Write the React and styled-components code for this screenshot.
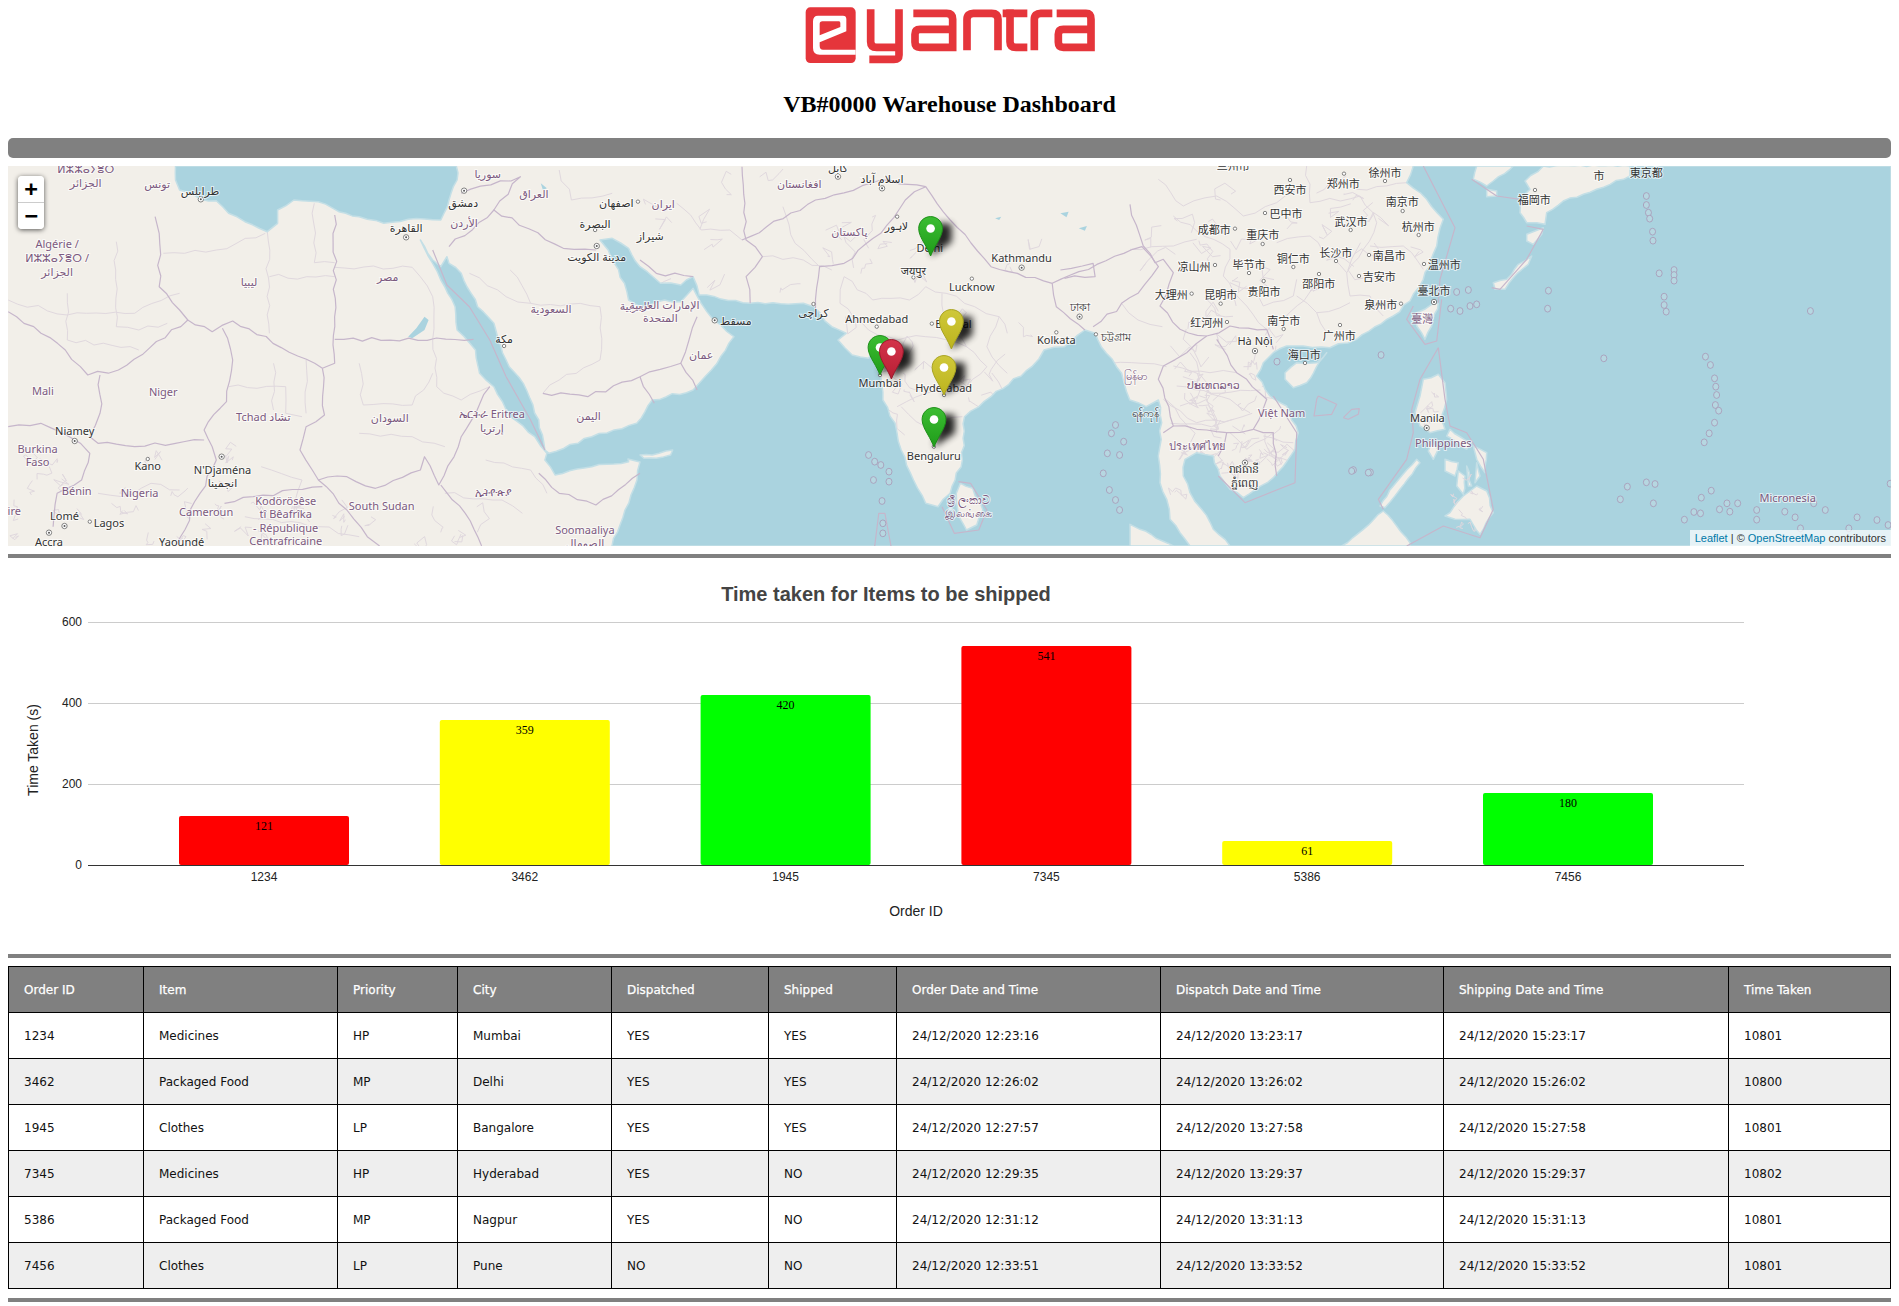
import React from 'react';
import styled, { createGlobalStyle } from 'styled-components';

const GlobalStyle = createGlobalStyle`
  html, body {
    margin: 0;
    padding: 0;
    background: #fff;
  }
  body {
    margin: 0 8px;
    font-family: "Liberation Serif", serif;
  }
`;

// map helpers: coordinates below were read from crops of the map, each with its own scale
const z2 = (x, y) => [x / 2.45, 160 + y / 3];
const z3 = (x, y) => [640 + x / 2.45, 160 + y / 3];
const z4 = (x, y) => [1260 + x / 2.42, 160 + y / 3];
const z11 = (x, y) => [1130 + x / 3, 166 + y / 3];

const conv = (fn, flat) => {
  const out = [];
  for (let i = 0; i < flat.length; i += 2) out.push(fn(flat[i], flat[i + 1]));
  return out;
};
const pts = (list) => list.map(([x, y]) => `${x.toFixed(1)},${y.toFixed(1)}`).join(' ');

let seed = 4711;
const noise = () => {
  seed = (seed * 16807) % 2147483647;
  return seed / 2147483647 - 0.5;
};

// breaks straight segments up so borders and coasts don't look ruled
const rough = (list, amp, step = 9) => {
  const out = [];
  list.forEach(([x, y], i) => {
    out.push([x, y]);
    const next = list[i + 1];
    if (!next) return;
    if (y >= 545 && next[1] >= 545) return;
    const dx = next[0] - x;
    const dy = next[1] - y;
    const len = Math.hypot(dx, dy);
    const parts = Math.floor(len / step);
    for (let k = 1; k < parts; k += 1) {
      const off = noise() * amp * 2;
      out.push([x + (dx * k) / parts - (dy / len) * off, y + (dy * k) / parts + (dx / len) * off]);
    }
  });
  return out;
};

// random walk province lines; the water is painted over whatever falls on the sea
const mesh = (x0, y0, x1, y1, count, reach) => {
  const lines = [];
  for (let i = 0; i < count; i += 1) {
    let x = x0 + (noise() + 0.5) * (x1 - x0);
    let y = y0 + (noise() + 0.5) * (y1 - y0);
    const line = [[x, y]];
    for (let k = 0; k < 5; k += 1) {
      x += noise() * reach;
      y += noise() * reach;
      line.push([x, y]);
    }
    lines.push(line);
  }
  return lines;
};

const OCEAN = [
  ...rough([
    [612, 546], [625, 510], [637, 480], [640, 462], [628, 459],
    ...conv(z2, [1540, 905, 1450, 920, 1360, 945, 1335, 900, 1340, 880, 1310, 830, 1250, 770, 1210, 680, 1175, 640, 1165, 570, 1120, 510, 1115, 440, 1080, 360, 1060, 310, 1030, 240, 1060, 300, 1080, 320, 1095, 290, 1100, 310, 1130, 340, 1170, 440, 1210, 490, 1240, 600, 1290, 690, 1320, 780, 1335, 870, 1345, 880, 1450, 830, 1560, 790]),
    ...conv(z3, [30, 720, 130, 690, 175, 630, 230, 530, 180, 480, 150, 430, 130, 385, 100, 425, 60, 420, 0, 440]),
    ...conv(z2, [1540, 420, 1530, 370, 1490, 270, 1470, 240, 1500, 235, 1540, 265, 1568, 320]),
    ...conv(z3, [50, 370, 100, 375, 130, 350, 145, 405, 270, 430, 400, 430, 425, 440, 470, 500, 505, 520, 485, 540, 520, 585, 560, 595, 585, 555, 590, 650, 595, 720, 625, 790, 640, 870, 670, 960, 700, 1030, 730, 1040, 760, 1000, 790, 900, 795, 770, 860, 710, 960, 620, 990, 570, 1040, 560, 1090, 510, 1115, 520, 1130, 560, 1180, 640, 1200, 720, 1240, 740, 1270, 720]),
    ...conv(z11, [95, 770, 85, 870, 90, 950, 110, 1000, 120, 1060, 180, 1140, 300, 1140, 250, 1090, 215, 1030, 180, 980, 160, 930, 165, 880, 200, 860, 250, 870, 270, 930, 300, 970, 340, 995, 430, 935, 495, 850, 505, 800, 470, 720, 420, 690, 380, 630, 400, 590, 430, 560, 470, 540, 520, 540, 600, 545, 680, 520, 790, 450, 840, 405, 880, 340, 920, 240, 940, 160, 890, 100, 830, 50, 850, 0]),
  ], 1.3, 7),
  [1891, 166], [1891, 546],
];

const MED = rough(conv(z2, [430, 18, 430, 60, 440, 90, 470, 100, 492, 118, 530, 122, 560, 160, 600, 185, 655, 215, 680, 190, 680, 150, 720, 120, 780, 125, 830, 155, 880, 170, 940, 190, 1000, 178, 1080, 180, 1100, 120, 1120, 60, 1118, 18]), 1.3, 7);

const ISLANDS = [
  conv(z3, [785, 970, 815, 985, 840, 1050, 825, 1095, 800, 1110, 780, 1060, 775, 1000]),
  conv(z11, [465, 620, 500, 590, 560, 590, 590, 560, 530, 650, 490, 665, 465, 640]),
  conv(z11, [860, 440, 905, 415, 925, 410, 905, 480, 885, 520, 860, 480]),
  conv(z11, [880, 640, 925, 625, 945, 650, 950, 700, 935, 750, 945, 790, 900, 800, 870, 780, 855, 740, 870, 690]),
  conv(z11, [905, 830, 925, 850, 910, 880, 895, 855]),
  conv(z11, [945, 880, 985, 890, 975, 930, 945, 915]),
  conv(z11, [985, 915, 1005, 930, 1000, 985, 980, 960]),
  conv(z11, [1010, 900, 1025, 960, 1015, 960]),
  conv(z11, [1040, 890, 1050, 930, 1035, 950]),
  conv(z11, [1030, 840, 1070, 860, 1065, 920, 1040, 880]),
  conv(z11, [960, 790, 1020, 830, 1010, 850, 950, 810]),
  conv(z11, [960, 1040, 1000, 990, 1040, 960, 1070, 975, 1090, 1040, 1050, 1105, 1020, 1060, 975, 1060, 945, 1050]),
  conv(z11, [750, 1020, 790, 960, 860, 880, 870, 890, 810, 970, 765, 1025]),
  conv(z11, [635, 1140, 700, 1090, 760, 1035, 800, 1080, 840, 1130, 840, 1140]),
  conv(z11, [0, 1075, 30, 1090, 130, 1140, 0, 1140]),
  conv(z11, [1185, 45, 1240, 0, 1500, 0, 1500, 30, 1400, 70, 1300, 105, 1250, 140, 1245, 175, 1220, 170, 1190, 170, 1170, 140, 1175, 100, 1200, 70]),
  conv(z11, [1040, 0, 1030, 40, 1070, 60, 1090, 45, 1140, 10, 1150, 0]),
  conv(z11, [1070, 70, 1100, 75, 1100, 90, 1070, 92]),
  conv(z11, [1090, 350, 1130, 340, 1165, 295, 1205, 270, 1195, 295, 1150, 335, 1125, 370, 1095, 370]),
  conv(z11, [1190, 205, 1240, 185, 1235, 205, 1210, 235, 1190, 225]),
  conv(z3, [0, 885, 30, 885, 80, 870, 75, 885, 40, 895, 10, 895]),
];

const BORDERS = [
  conv(z2, [20, 455, 160, 570, 215, 645, 290, 630, 460, 480, 520, 515, 570, 483, 790, 625, 820, 610, 820, 165]),
  conv(z2, [790, 625, 795, 765, 750, 800, 735, 870, 780, 960, 850, 950, 920, 985, 1030, 930, 1040, 890, 1075, 975, 1130, 830, 1200, 680]),
  conv(z2, [820, 538, 1160, 538]),
  conv(z2, [380, 170, 390, 220, 390, 380, 440, 450, 460, 480]),
  conv(z2, [545, 505, 570, 600, 555, 725, 500, 810, 520, 860, 530, 900, 490, 1000, 430, 1158]),
  conv(z2, [245, 645, 245, 760, 220, 830, 240, 850, 330, 860, 430, 850, 500, 840]),
  conv(z2, [20, 800, 100, 790, 170, 830, 220, 880, 200, 960, 140, 1000, 130, 1100]),
  conv(z2, [1100, 260, 1210, 150, 1380, 265, 1460, 270]),
  conv(z2, [1330, 700, 1440, 710, 1568, 650]),
  conv(z2, [1320, 940, 1370, 1000, 1460, 1035, 1568, 940]),
  conv(z2, [1130, 100, 1275, 50, 1210, 150]),
  conv(z2, [780, 960, 850, 1050, 900, 1130, 930, 1158]),
  conv(z2, [1080, 975, 1140, 1060, 1180, 1158]),
  conv(z2, [550, 1030, 620, 1010, 790, 980]),
  conv(z3, [250, 20, 260, 240, 300, 290, 260, 350, 270, 430]),
  conv(z3, [430, 450, 440, 320, 500, 310, 590, 220, 650, 120, 700, 80, 760, 180, 860, 320, 1010, 370, 1230, 260, 1270, 320, 1220, 400, 1110, 500]),
  conv(z3, [1010, 370, 1020, 440, 1090, 510]),
  conv(z3, [1030, 330, 1110, 310, 1115, 350, 1040, 355]),
  conv(z3, [250, 240, 430, 120, 590, 60, 700, 80]),
  conv(z3, [0, 300, 40, 340, 130, 350]),
  conv(z3, [0, 650, 100, 610, 140, 690]),
  conv(z3, [0, 650, 35, 730]),
  conv(z3, [100, 610, 120, 540, 140, 470]),
  conv(z11, [0, 115, 40, 240, 75, 290, 100, 280, 130, 320, 90, 420, 150, 490, 230, 510, 300, 480, 410, 490, 430, 550]),
  conv(z11, [230, 510, 170, 560, 100, 600, 85, 640, 130, 780, 100, 800]),
  conv(z11, [260, 520, 320, 620, 350, 640, 410, 700, 370, 790, 290, 800, 200, 790, 130, 780]),
  conv(z11, [290, 800, 265, 870]),
  conv(z11, [370, 790, 430, 800, 440, 930]),
].map((line) => rough(line, 2));

const MINOR = [
  conv(z2, [655, 215, 660, 520]), conv(z2, [660, 350, 820, 350]), conv(z2, [770, 130, 770, 308, 820, 308]),
  conv(z2, [820, 322, 1010, 322, 1060, 410, 1060, 538]), conv(z2, [165, 400, 165, 540, 340, 570]),
  conv(z2, [285, 245, 285, 500, 340, 510, 410, 490]), conv(z2, [20, 420, 165, 465, 330, 460, 440, 400]),
  conv(z2, [400, 280, 530, 270, 650, 220]), conv(z2, [560, 680, 700, 680, 700, 760, 740, 770]),
  conv(z2, [670, 610, 670, 750]), conv(z2, [750, 600, 750, 760]), conv(z2, [880, 610, 890, 735, 1010, 735, 1060, 640]),
  conv(z2, [1060, 540, 1070, 680, 1130, 720, 1200, 680]), conv(z2, [880, 820, 1010, 830, 1090, 860]),
  conv(z2, [1250, 330, 1300, 430, 1470, 440, 1470, 600, 1370, 660, 1330, 700]), conv(z2, [1150, 340, 1240, 410, 1300, 430]),
  conv(z2, [1370, 30, 1400, 120, 1500, 100]), conv(z2, [240, 1000, 300, 1010, 370, 970, 440, 990]), conv(z2, [1190, 900, 1300, 930, 1340, 1000]),
  conv(z2, [1090, 1000, 1230, 1020, 1280, 1060]), conv(z2, [640, 920, 740, 960, 720, 1060]), conv(z2, [600, 1070, 780, 1100, 880, 1130]),
  conv(z3, [90, 130, 150, 210, 220, 210, 250, 240]), conv(z3, [350, 140, 380, 250, 440, 320]), conv(z3, [300, 290, 400, 300, 470, 330]),
  conv(z3, [500, 350, 570, 420, 660, 420, 700, 380, 750, 400, 820, 440, 880, 470, 900, 520]),
  conv(z3, [630, 540, 700, 530, 800, 560, 850, 620, 800, 680, 700, 700, 630, 740]), conv(z3, [640, 740, 700, 800, 790, 770]),
  conv(z3, [500, 350, 490, 430, 560, 510, 630, 540]), conv(z3, [740, 400, 745, 470, 800, 560]), conv(z3, [880, 470, 850, 560, 900, 640]),
  conv(z3, [1180, 430, 1220, 480, 1280, 500]), conv(z3, [1150, 610, 1230, 610, 1290, 620]), conv(z3, [1330, 650, 1400, 700, 1520, 690]),
  conv(z3, [1300, 790, 1400, 800, 1500, 760]), conv(z3, [1290, 720, 1360, 820, 1320, 900]),
  conv(z11, [85, 40, 160, 120, 260, 90, 340, 150, 440, 110, 530, 60]), conv(z11, [130, 150, 300, 250, 280, 330, 350, 420, 410, 490]),
  conv(z11, [0, 250, 130, 240, 200, 220]), conv(z11, [530, 0, 540, 110, 690, 90, 740, 170, 700, 250, 650, 320]),
  conv(z11, [440, 230, 540, 210, 650, 320, 660, 390, 720, 390, 760, 450]), conv(z11, [720, 240, 820, 240, 880, 310]),
  conv(z11, [500, 340, 490, 390, 400, 420, 370, 370, 300, 350]), conv(z11, [500, 390, 560, 440, 590, 500]), conv(z11, [560, 440, 660, 410]),
  conv(z11, [680, 70, 830, 50]), conv(z11, [130, 600, 240, 620, 320, 620]), conv(z11, [140, 660, 300, 700, 360, 740]),
  conv(z11, [150, 720, 230, 700, 260, 800]), conv(z11, [100, 700, 200, 770, 310, 760]), conv(z11, [300, 800, 350, 850, 430, 800]),
  conv(z11, [400, 810, 490, 830]), conv(z11, [400, 860, 490, 890]), conv(z11, [180, 560, 230, 650, 200, 700]),
].map((line) => rough(line, 2.4)).concat(
  mesh(1175, 345, 1300, 470, 46, 16),
  mesh(1130, 166, 1420, 350, 34, 22),
  mesh(830, 230, 1040, 430, 26, 20),
  mesh(10, 440, 240, 546, 26, 16),
  mesh(240, 500, 480, 546, 14, 18),
  mesh(640, 166, 830, 300, 10, 22),
  mesh(1180, 440, 1290, 546, 12, 14),
);

const ISLAND_LINES = [
  ...mesh(1420, 385, 1445, 430, 6, 9),
  ...mesh(1450, 480, 1485, 530, 8, 9),
];

const MARITIME = [
  conv(z11, [880, 0, 975, 185, 930, 340, 925, 410]),
  conv(z11, [935, 400, 920, 525, 885, 535, 830, 460, 850, 420]),
  conv(z11, [565, 690, 620, 715, 605, 745, 552, 750, 560, 700, 565, 690]),
  conv(z11, [640, 755, 665, 730, 688, 728, 685, 745, 655, 760, 640, 755]),
  conv(z11, [430, 690, 500, 800, 495, 950, 345, 1010, 265, 930]),
  conv(z11, [925, 545, 945, 700, 960, 780, 1010, 800, 1060, 880, 1090, 1030, 1050, 1115, 940, 1080, 830, 1140]),
  conv(z11, [925, 545, 870, 640, 845, 730, 850, 800, 830, 880, 745, 1000, 760, 1030]),
  conv(z11, [1025, 40, 1100, 90, 1170, 100]),
  conv(z11, [1085, 365, 1110, 370, 1190, 280, 1240, 190, 1190, 180]),
  conv(z2, [1060, 270, 1095, 375, 1150, 440, 1200, 540, 1240, 650, 1300, 780, 1335, 870]),
  conv(z3, [575, 1158, 585, 1060, 600, 1060, 615, 1158]),
  conv(z3, [740, 1040, 770, 1120, 830, 1110, 850, 1050, 810, 970, 780, 965]),
];

const LAKES = [
  conv(z2, [1000, 530, 1020, 505, 1040, 470, 1050, 480, 1040, 510, 1010, 535]),
  conv(z3, [1030, 160, 1050, 155, 1045, 172]), conv(z3, [1075, 205, 1095, 198, 1090, 212]),
  conv(z3, [870, 175, 885, 170, 880, 180]), conv(z2, [1325, 70, 1340, 85, 1330, 90]),
];

const ISLETS = [
  ...conv(z4, [935, 108, 935, 135, 940, 158, 943, 176, 950, 215, 951, 242, 966, 340, 978, 410, 978, 435, 983, 455, 1332, 453, 698, 392, 696, 446, 1078, 590, 1090, 615, 1100, 655, 1103, 680, 1105, 705, 1102, 735, 1110, 752, 1100, 788, 1087, 820, 1075, 847, 832, 595, 293, 585, 41, 605, 889, 980, 935, 967, 956, 972, 872, 1018, 952, 1030, 1092, 992, 1068, 1013, 1050, 1056, 1066, 1060, 1027, 1079, 1112, 1048, 1137, 1055, 1130, 1030, 1156, 1030, 1202, 1050, 1202, 1079, 1270, 1055, 1295, 1072, 1368, 1050, 1445, 1072, 1493, 1080, 1520, 1095, 1525, 971, 1340, 1030, 1308, 1105, 1425, 1105, 226, 930, 267, 937, 1002, 330, 1002, 345, 1002, 362]),
  ...conv(z11, [980, 378, 1015, 372, 962, 428, 990, 435, 1020, 420, 1040, 415, 665, 915, 715, 920]),
  ...conv(z3, [560, 885, 575, 905, 590, 915, 572, 960, 610, 935, 610, 965, 593, 1023, 1165, 795, 1185, 845, 1175, 885, 1145, 880, 1135, 940, 1155, 820, 1150, 990, 1175, 1050, 1165, 1020, 595, 1090, 595, 1120]),
];

const PURPLE = '#7c5a80';
const labelsFrom = (fn, kind, list) => list.map(([text, x, y]) => {
  const [px, py] = fn(x, y);
  return { text, x: px, y: py, kind };
});

const LABELS = [
  ...labelsFrom(z2, 'country', [
    ['ⵍⵣⵣⴰⵢⴻⵔ', 210, 28], ['الجزائر', 210, 68], ['تونس', 385, 72], ['سوريا', 1195, 42], ['العراق', 1308, 103], ['الأردن', 1137, 188],
    ['Algérie /', 140, 253], ['ⵍⵣⵣⴰⵢⴻⵔ /', 140, 294], ['الجزائر', 140, 335], ['ليبيا', 610, 367], ['مصر', 950, 350], ['السعودية', 1350, 448],
    ['العربية', 1555, 437], ['Mali', 105, 692], ['Niger', 400, 695], ['Tchad تشاد', 645, 770], ['السودان', 955, 773], ['ኤርትራ Eritrea', 1205, 763],
    ['إرتريا', 1205, 805], ['اليمن', 1442, 768], ['Burkina', 92, 866], ['Faso', 92, 907], ['Bénin', 188, 993], ['Nigeria', 342, 1000],
    ['Cameroun', 505, 1056], ['Kodörösêse', 700, 1023], ['tî Bêafrîka', 700, 1063], ['- République', 700, 1103], ['Centrafricaine', 700, 1143],
    ['South Sudan', 935, 1039], ['ኢትዮጵያ', 1210, 995], ['Soomaaliya', 1433, 1110], ['الصومال', 1433, 1150], ['ire', 35, 1053],
  ]),
  ...labelsFrom(z2, 'city', [
    ['طرابلس', 490, 92], ['دمشق', 1135, 128], ['اصفهان', 1510, 130], ['البصرة', 1458, 192], ['القاهرة', 995, 203], ['مدينة الكويت', 1462, 292],
    ['مكة', 1235, 538], ['Niamey', 183, 813], ['Kano', 362, 918], ["N'Djaména", 545, 930], ['انجمينا', 545, 970], ['Lomé', 158, 1068],
    ['Lagos', 267, 1090], ['Accra', 120, 1147], ['Yaoundé', 445, 1146],
  ]),
  ...labelsFrom(z3, 'country', [
    ['افغانستان', 390, 72], ['ایران', 57, 132], ['پاکستان', 513, 215], ['الإمارات العربية', 60, 435], ['المتحدة', 50, 475], ['عمان', 150, 586],
    ['မြန်မာ', 1215, 647], ['ශ්‍රී ලංකාව', 805, 1021], ['இலங்கை', 805, 1060],
  ]),
  ...labelsFrom(z3, 'city', [
    ['کابل', 485, 25], ['اسلام آباد', 593, 58], ['شیراز', 25, 228], ['لاہور', 628, 198], ['Delhi', 710, 263], ['जयपुर', 670, 332],
    ['Kathmandu', 935, 294], ['Lucknow', 813, 380], ['Ahmedabad', 580, 477], ['Bhopal', 768, 493], ['Mumbai', 588, 670], ['Hyderabad', 744, 683],
    ['Bengaluru', 720, 887], ['Kolkata', 1020, 540], ['ঢাকা', 1077, 442], ['চট্টগ্রাম', 1165, 532], ['کراچی', 425, 460], ['مسقط', 235, 483],
    ['ရန်ကုန်', 1238, 760],
  ]),
  ...labelsFrom(z11, 'cjk', [
    ['兰州市', 310, 0], ['西安市', 480, 72], ['郑州市', 640, 55], ['徐州市', 765, 22], ['南京市', 817, 108], ['巴中市', 468, 145], ['武汉市', 663, 168],
    ['杭州市', 865, 182], ['成都市', 253, 193], ['重庆市', 398, 208], ['长沙市', 617, 262], ['南昌市', 778, 270], ['铜仁市', 490, 280], ['温州市', 943, 297],
    ['凉山州', 192, 302], ['毕节市', 357, 296], ['吉安市', 748, 333], ['邵阳市', 566, 353], ['贵阳市', 402, 377], ['大理州', 124, 388], ['昆明市', 272, 388],
    ['泉州市', 752, 416], ['臺北市', 912, 376], ['红河州', 230, 472], ['南宁市', 461, 465], ['广州市', 628, 510], ['海口市', 523, 568], ['福岡市', 1213, 103], ['市', 1407, 30],
  ]),
  ...labelsFrom(z4, 'cjk', [['東京都', 935, 40]]),
  ...labelsFrom(z11, 'cjkCountry', [['臺灣', 877, 460]]),
  ...labelsFrom(z11, 'city', [['Hà Nội', 375, 526], ['Manila', 892, 757], ['រាជធានី', 343, 910], ['ភ្នំពេញ', 343, 952]]),
  ...labelsFrom(z11, 'country', [['ປະເທດລາວ', 250, 657], ['Việt Nam', 455, 742], ['Philippines', 940, 832], ['ประเทศไทย', 202, 840]]),
  ...labelsFrom(z4, 'country', [['Micronesia', 1277, 1013]]),
];

const TOWNS = [
  ...conv(z11, [480, 42, 642, 23, 765, 45, 818, 135, 405, 141, 662, 192, 866, 207, 315, 188, 398, 234, 618, 285, 717, 267, 490, 303, 882, 294, 255, 297, 357, 321, 687, 330, 567, 324, 401, 345, 185, 383, 272, 413, 813, 413, 291, 468, 461, 489, 630, 477, 525, 591, 1215, 72]),
  ...conv(z2, [362, 897, 220, 1085, 1458, 210, 1235, 558, 1563, 125]),
  ...conv(z3, [630, 170, 670, 352, 813, 356, 425, 432, 580, 500, 715, 491, 1020, 517, 1117, 523, 720, 860, 745, 705, 588, 645]),
];

const CAPITALS = [
  ...conv(z11, [375, 555, 912, 408, 890, 786, 345, 890]),
  ...conv(z2, [492, 118, 1137, 92, 995, 232, 1462, 258, 183, 843, 543, 890, 120, 1118, 158, 1098]),
  ...conv(z3, [485, 50, 593, 85, 935, 323, 1077, 470, 183, 481]),
];

const PINS = [
  { x: 930.6, y: 256, color: 'green' },
  { x: 951.4, y: 349, color: 'yellow' },
  { x: 880, y: 375, color: 'green' },
  { x: 891.4, y: 379, color: 'red' },
  { x: 944, y: 395, color: 'yellow' },
  { x: 934, y: 447, color: 'green' },
];

const PIN_PATH = 'M12.5 .6C5.7 .6 .6 5.9 .6 12.6C.6 17 3 22 6 27C8.5 31.5 11 36 12.5 40C14 36 16.5 31.5 19 27C22 22 24.4 17 24.4 12.6C24.4 5.9 19.3 .6 12.5 .6Z';
const PIN_EDGE = { green: '#1d8f18', yellow: '#a8a321', red: '#98192b' };

function MapCanvas() {
  return (
    <MapDrawing viewBox="8 166 1883 380" width="1883" height="380">
      <defs>
        <filter id="pinShadow" x="-50%" y="-50%" width="200%" height="200%">
          <feGaussianBlur stdDeviation="3.5" />
        </filter>
        <linearGradient id="pin-green" x1="0" y1="0" x2="0" y2="1">
          <stop offset="0" stopColor="#3cbd32" />
          <stop offset="1" stopColor="#1f9c1a" />
        </linearGradient>
        <linearGradient id="pin-yellow" x1="0" y1="0" x2="0" y2="1">
          <stop offset="0" stopColor="#cfc83a" />
          <stop offset="1" stopColor="#bdb41e" />
        </linearGradient>
        <linearGradient id="pin-red" x1="0" y1="0" x2="0" y2="1">
          <stop offset="0" stopColor="#d3334a" />
          <stop offset="1" stopColor="#b81f35" />
        </linearGradient>
      </defs>

      <rect x="8" y="166" width="1883" height="380" fill="#f2efe9" />
      {MINOR.map((line, i) => <MinorBorder key={i} points={pts(line)} />)}
      {LAKES.map((lake, i) => <Lake key={i} points={pts(lake)} />)}
      <Water points={pts(MED)} />
      <Water points={pts(OCEAN)} />
      {ISLANDS.map((land, i) => <Island key={i} points={pts(rough(land, 1, 6))} />)}
      {ISLAND_LINES.map((line, i) => <MinorBorder key={i} points={pts(line)} />)}
      {BORDERS.map((line, i) => <CountryBorder key={i} points={pts(line)} />)}
      {MARITIME.map((line, i) => <CountryBorder key={i} points={pts(line)} />)}
      {ISLETS.map(([cx, cy], i) => <Islet key={i} cx={cx} cy={cy} rx="3" ry="3.4" />)}
      {TOWNS.map(([cx, cy], i) => <Town key={i} cx={cx} cy={cy} r="1.7" />)}
      {CAPITALS.map(([cx, cy], i) => (
        <g key={i}>
          <Town cx={cx} cy={cy} r="2.7" />
          <circle cx={cx} cy={cy} r="1" fill="#555" />
        </g>
      ))}
      {LABELS.map((label, i) => (
        <PlaceLabel key={i} x={label.x} y={label.y} dy="4" $kind={label.kind}>{label.text}</PlaceLabel>
      ))}

      {PINS.map((pin, i) => (
        <polygon
          key={i}
          points={`${pin.x},${pin.y} ${pin.x + 7},${pin.y - 33} ${pin.x + 21},${pin.y - 32} ${pin.x + 21},${pin.y - 14}`}
          fill="#000"
          opacity="0.85"
          filter="url(#pinShadow)"
        />
      ))}
      {PINS.map((pin, i) => (
        <g key={i} transform={`translate(${pin.x - 12.5} ${pin.y - 40})`}>
          <path d={PIN_PATH} fill={`url(#pin-${pin.color})`} stroke={PIN_EDGE[pin.color]} strokeWidth="1" />
          <circle cx="12.5" cy="12.5" r="4.3" fill="#fff" />
        </g>
      ))}
    </MapDrawing>
  );
}

const BARS = [
  { id: 1234, value: 121, color: '#ff0000' },
  { id: 3462, value: 359, color: '#ffff00' },
  { id: 1945, value: 420, color: '#00ff00' },
  { id: 7345, value: 541, color: '#ff0000' },
  { id: 5386, value: 61, color: '#ffff00' },
  { id: 7456, value: 180, color: '#00ff00' },
];

const BASE_Y = 865;
const PX_PER_UNIT = 243 / 600;

function ShippingChart() {
  return (
    <ChartDrawing viewBox="8 558 1883 396" width="1883" height="396">
      <ChartTitle x="886" y="601" textAnchor="middle">Time taken for Items to be shipped</ChartTitle>
      {[600, 400, 200].map((tick) => {
        const y = BASE_Y - tick * PX_PER_UNIT + 0.5;
        return <line key={tick} x1="88" x2="1744" y1={y} y2={y} stroke="#ccc" />;
      })}
      {[600, 400, 200, 0].map((tick) => (
        <AxisText key={tick} x="82" y={BASE_Y - tick * PX_PER_UNIT + 4} textAnchor="end">{tick}</AxisText>
      ))}
      {BARS.map((bar, i) => {
        const cx = 264 + i * 260.8;
        const top = Math.round(BASE_Y + 0.5 - bar.value * PX_PER_UNIT);
        return (
          <g key={bar.id}>
            <rect x={cx - 85} y={top} width="170" height={BASE_Y - top} rx="2" fill={bar.color} />
            <BarValue x={cx} y={top + 14} textAnchor="middle">{bar.value}</BarValue>
            <AxisText x={cx} y={BASE_Y + 16} textAnchor="middle">{bar.id}</AxisText>
          </g>
        );
      })}
      <line x1="88" x2="1744" y1={BASE_Y + 0.5} y2={BASE_Y + 0.5} stroke="#333" />
      <AxisTitle x="916" y="916" textAnchor="middle">Order ID</AxisTitle>
      <AxisTitle x="38" y="750" textAnchor="middle" transform="rotate(-90 38 750)">Time Taken (s)</AxisTitle>
    </ChartDrawing>
  );
}

const COLUMNS = [
  ['Order ID', 135], ['Item', 194], ['Priority', 120], ['City', 154], ['Dispatched', 157], ['Shipped', 128],
  ['Order Date and Time', 264], ['Dispatch Date and Time', 283], ['Shipping Date and Time', 285], ['Time Taken', 162],
];

const ROWS = [
  ['1234', 'Medicines', 'HP', 'Mumbai', 'YES', 'YES', '24/12/2020 12:23:16', '24/12/2020 13:23:17', '24/12/2020 15:23:17', '10801'],
  ['3462', 'Packaged Food', 'MP', 'Delhi', 'YES', 'YES', '24/12/2020 12:26:02', '24/12/2020 13:26:02', '24/12/2020 15:26:02', '10800'],
  ['1945', 'Clothes', 'LP', 'Bangalore', 'YES', 'YES', '24/12/2020 12:27:57', '24/12/2020 13:27:58', '24/12/2020 15:27:58', '10801'],
  ['7345', 'Medicines', 'HP', 'Hyderabad', 'YES', 'NO', '24/12/2020 12:29:35', '24/12/2020 13:29:37', '24/12/2020 15:29:37', '10802'],
  ['5386', 'Packaged Food', 'MP', 'Nagpur', 'YES', 'NO', '24/12/2020 12:31:12', '24/12/2020 13:31:13', '24/12/2020 15:31:13', '10801'],
  ['7456', 'Clothes', 'LP', 'Pune', 'NO', 'NO', '24/12/2020 12:33:51', '24/12/2020 13:33:52', '24/12/2020 15:33:52', '10801'],
];

function Logo() {
  return (
    <LogoMark viewBox="0 0 900 210" width="300" height="70">
      <rect x="17" y="22" width="150" height="167" rx="14" />
      <path
        fill="#fff"
        fillRule="evenodd"
        d="M54 47H129Q139 47 139 57V94L59 127V137Q59 149 69 149H167V164H59Q39 164 39 144V64Q39 47 54 47ZM67 64Q59 64 59 72V106L121 81V69Q121 64 117 64Z"
      />
      <LogoStroke d="M212 28V125Q212 142 230 142H297M297 28V165Q297 178 282 178H208" />
      <LogoStroke d="M340 40H440Q458 40 458 58V142H360Q345 142 345 127V103Q345 88 360 88H458" />
      <LogoStroke d="M501 151V58Q501 40 520 40H575Q594 40 594 58V151" />
      <LogoStroke d="M630 28V125Q630 142 648 142H682M608 40H682" />
      <LogoStroke d="M703 151V58Q703 40 722 40H757" />
      <LogoStroke d="M770 40H858Q873 40 873 58V142H790Q775 142 775 127V103Q775 88 790 88H873" />
    </LogoMark>
  );
}

function App() {
  return (
    <>
      <GlobalStyle />
      <Header>
        <Logo />
        <Title>VB#0000 Warehouse Dashboard</Title>
      </Header>
      <ProgressBar />
      <MapPanel>
        <MapCanvas />
        <ZoomControl>
          <ZoomButton>+</ZoomButton>
          <ZoomButton>−</ZoomButton>
        </ZoomControl>
        <Attribution>
          <a href="#leaflet">Leaflet</a> | © <a href="#osm">OpenStreetMap</a> contributors
        </Attribution>
      </MapPanel>
      <Rule $top={8} />
      <ShippingChart />
      <Rule $top={0} />
      <OrdersTable>
        <colgroup>
          {COLUMNS.map(([name, width]) => <Column key={name} $width={width} />)}
        </colgroup>
        <thead>
          <tr>{COLUMNS.map(([name]) => <HeadCell key={name}>{name}</HeadCell>)}</tr>
        </thead>
        <tbody>
          {ROWS.map((row) => (
            <OrderRow key={row[0]}>
              {row.map((cell, i) => <Cell key={i}>{cell}</Cell>)}
            </OrderRow>
          ))}
        </tbody>
      </OrdersTable>
      <Rule $top={9} />
    </>
  );
}

const Header = styled.header`
  display: flex;
  flex-direction: column;
  align-items: center;
`;

const LogoMark = styled.svg`
  display: block;
  fill: #e5353b;
`;

const LogoStroke = styled.path`
  fill: none;
  stroke: #e5353b;
  stroke-width: 23;
`;

const Title = styled.h2`
  margin: 20px 0;
  font-size: 24px;
  line-height: 28px;
  font-weight: bold;
  color: #000;
`;

const ProgressBar = styled.div`
  height: 20px;
  border-radius: 5px;
  background: #808080;
`;

const MapPanel = styled.div`
  position: relative;
  height: 380px;
  margin-top: 8px;
  overflow: hidden;
`;

const MapDrawing = styled.svg`
  display: block;
`;

const Water = styled.polygon`
  fill: #aad3df;
  stroke: #c4dfe6;
  stroke-width: 1.5;
  stroke-linejoin: round;
`;

const Lake = styled.polygon`
  fill: #aad3df;
`;

const Island = styled.polygon`
  fill: #f2efe9;
  stroke: #c4dfe6;
  stroke-width: 1.5;
  stroke-linejoin: round;
`;

const CountryBorder = styled.polyline`
  fill: none;
  stroke: #c6b6cb;
  stroke-width: 1.2;
  stroke-linejoin: round;
`;

const MinorBorder = styled.polyline`
  fill: none;
  stroke: #e0d8de;
  stroke-width: 1;
  stroke-linejoin: round;
`;

const Islet = styled.ellipse`
  fill: #b6d7e1;
  stroke: #a797b5;
  stroke-width: 0.8;
`;

const Town = styled.circle`
  fill: #fff;
  stroke: #666;
  stroke-width: 0.8;
`;

const PlaceLabel = styled.text`
  font-family: ${({ $kind }) => ($kind === 'cjk' || $kind === 'cjkCountry'
    ? '"Noto Sans CJK SC", "DejaVu Sans", sans-serif'
    : '"Noto Sans", "DejaVu Sans", "Noto Sans CJK SC", sans-serif')};
  font-size: 11px;
  fill: ${({ $kind }) => ($kind === 'country' || $kind === 'cjkCountry' ? PURPLE : '#333')};
  text-anchor: middle;
  stroke: rgba(255, 255, 255, 0.65);
  stroke-width: 2px;
  paint-order: stroke;
`;

const ZoomControl = styled.div`
  position: absolute;
  top: 10px;
  left: 10px;
  width: 26px;
  border-radius: 4px;
  box-shadow: 0 1px 5px rgba(0, 0, 0, 0.65);
  overflow: hidden;
`;

const ZoomButton = styled.div`
  height: 26px;
  background: #fff;
  color: #000;
  font: bold 22px/26px "DejaVu Sans Mono", "Liberation Mono", monospace;
  text-align: center;
  &:first-child {
    border-bottom: 1px solid #ccc;
  }
`;

const Attribution = styled.div`
  position: absolute;
  right: 0;
  bottom: 0;
  padding: 0 5px;
  background: rgba(255, 255, 255, 0.7);
  color: #333;
  font: 11px/16px "Liberation Sans", Arial, sans-serif;

  a {
    color: #0078a8;
    text-decoration: none;
  }
`;

const Rule = styled.div`
  height: 4px;
  margin-top: ${({ $top }) => $top}px;
  background: #808080;
`;

const ChartDrawing = styled.svg`
  display: block;
`;

const ChartTitle = styled.text`
  font: bold 20px "Liberation Sans", Arial, sans-serif;
  fill: #444;
`;

const AxisText = styled.text`
  font: 12px "Liberation Sans", Arial, sans-serif;
  fill: #222;
`;

const AxisTitle = styled.text`
  font: 14px "Liberation Sans", Arial, sans-serif;
  fill: #222;
`;

const BarValue = styled.text`
  font: 12px "Liberation Serif", serif;
  fill: #000;
`;

const OrdersTable = styled.table`
  width: 1882px;
  margin-top: 8px;
  table-layout: fixed;
  border-collapse: collapse;
  font: 12px "DejaVu Sans", Verdana, sans-serif;
`;

const Column = styled.col`
  width: ${({ $width }) => $width}px;
`;

const HeadCell = styled.th`
  height: 45px;
  padding: 0 0 0 15px;
  border: 1px solid #000;
  background: #808080;
  color: #fff;
  font-weight: normal;
  text-align: left;
  -webkit-text-stroke: 0.25px #fff;
`;

const Cell = styled.td`
  height: 45px;
  padding: 0 0 0 15px;
  border: 1px solid #000;
  color: #111;
`;

const OrderRow = styled.tr`
  &:nth-child(even) {
    background: #eee;
  }
`;

export default App;
